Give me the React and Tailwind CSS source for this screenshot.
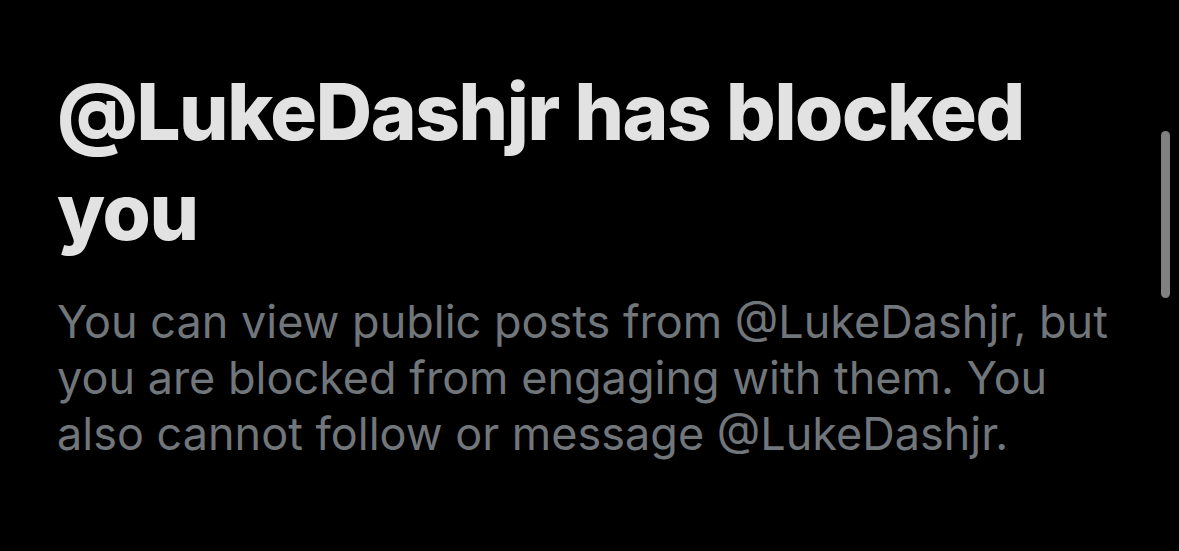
export default function App() {
  return (
    <div className="relative w-[1179px] h-[551px] bg-black overflow-hidden" style={{ fontFamily: 'Inter, "Noto Sans", sans-serif' }}>
      <div className="pl-[57px] pt-[62px]">
        <h1 className="text-[78px] leading-[100px] font-extrabold text-[#e2e2e2] tracking-[-1.4px]">
          @LukeDashjr has blocked you
        </h1>
        <p className="mt-[32px] text-[45px] leading-[56px] text-[#71767b] w-[1065px]">
          You can view public posts from @LukeDashjr, but you are blocked from engaging with them. You also cannot follow or message @LukeDashjr.
        </p>
      </div>
      {/* scroll indicator */}
      <div className="absolute left-[1161px] top-[131px] w-[9px] h-[167px] rounded-full bg-[#808080]" />
    </div>
  );
}
